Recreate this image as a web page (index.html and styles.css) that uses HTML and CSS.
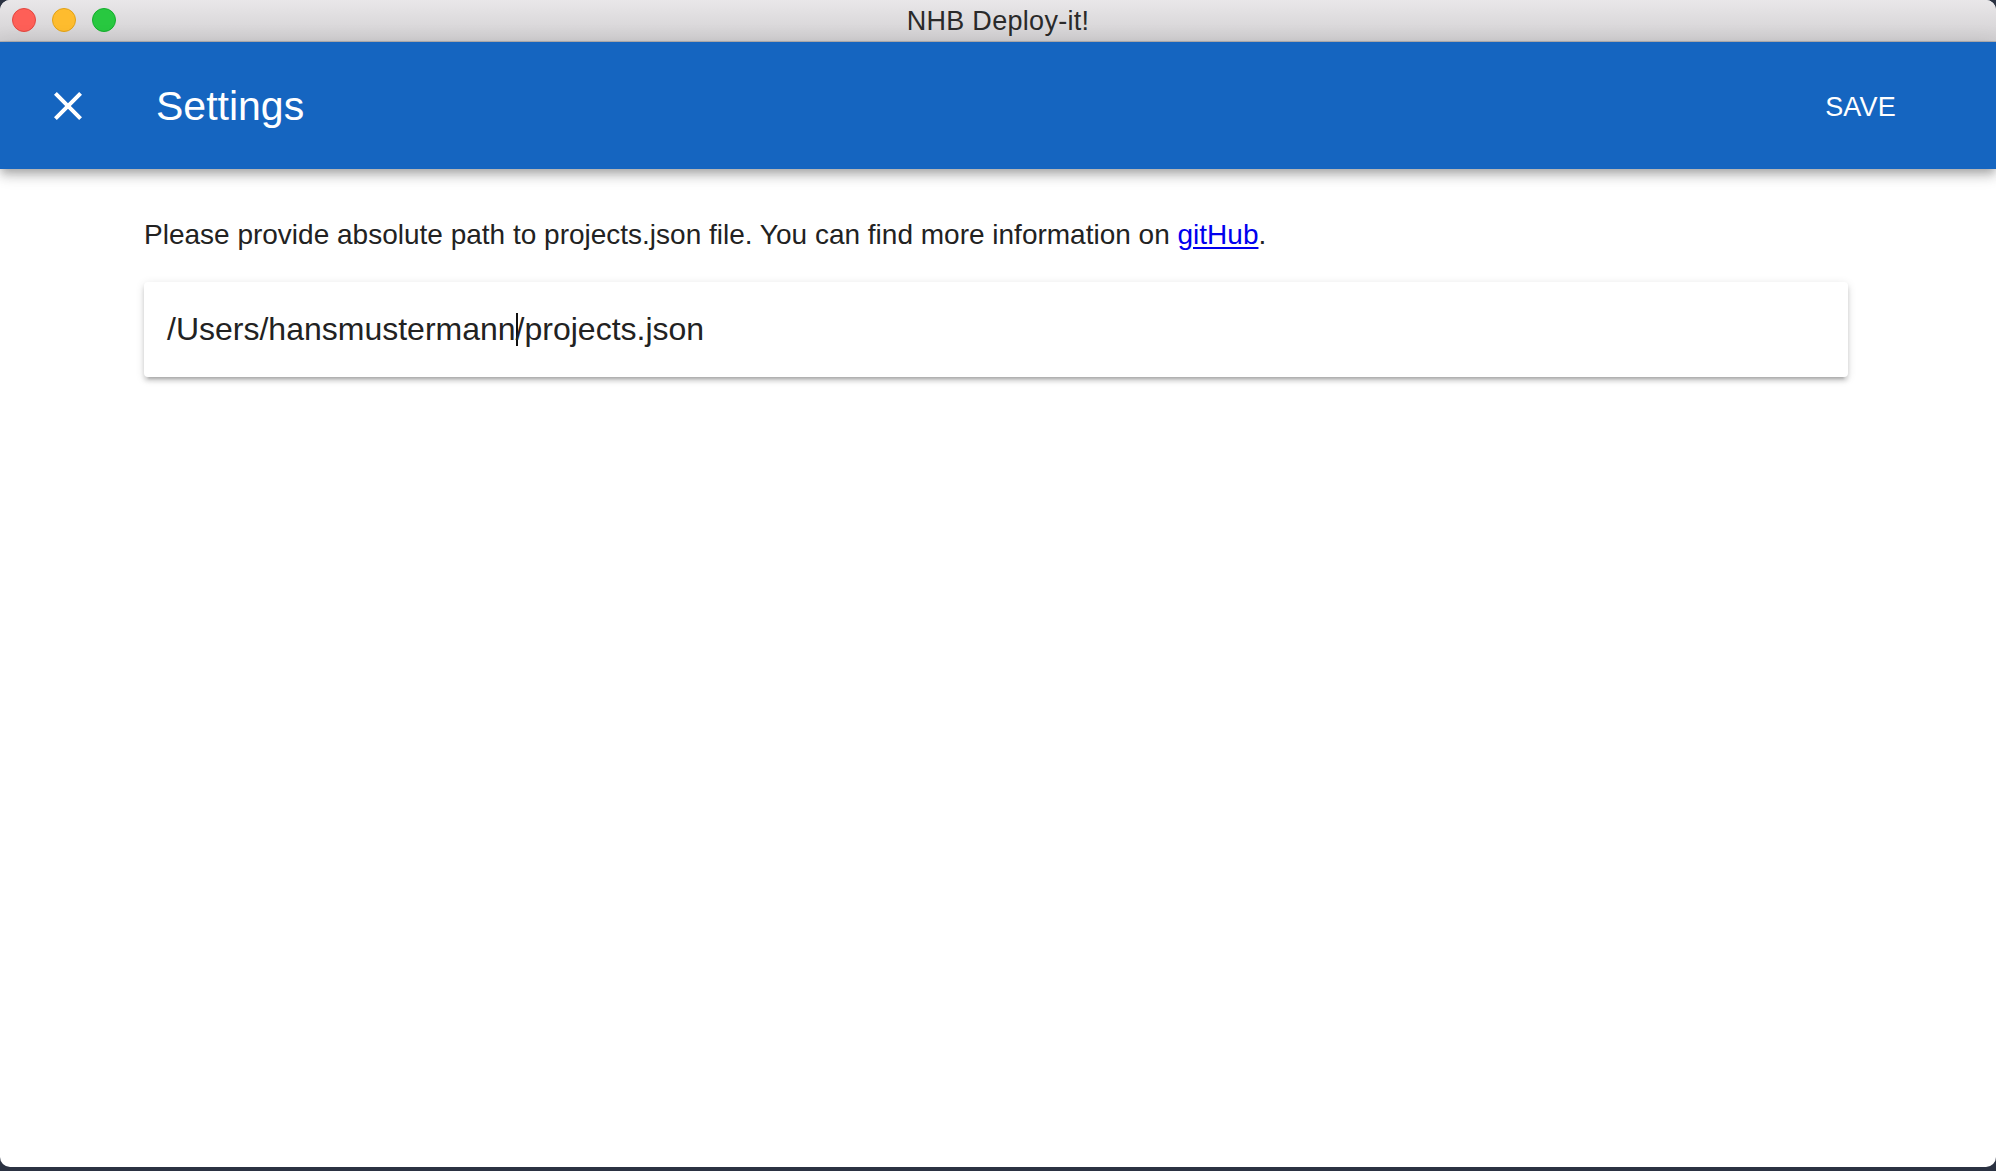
FILE: index.html
```html
<!DOCTYPE html>
<html lang="en">
<head>
<meta charset="utf-8">
<title>NHB Deploy-it!</title>
<link rel="stylesheet" href="styles.css">
</head>
<body>
<div class="window">
  <div class="titlebar">
    <div class="lights">
      <span class="light red"></span>
      <span class="light yellow"></span>
      <span class="light green"></span>
    </div>
    <div class="title">NHB Deploy-it!</div>
    <div class="spacer"></div>
  </div>
  <header class="appbar">
    <svg class="close-icon" viewBox="0 0 24 24" width="48" height="48" aria-hidden="true">
      <path fill="#fff" d="M19 6.41L17.59 5 12 10.59 6.41 5 5 6.41 10.59 12 5 17.59 6.41 19 12 13.41 17.59 19 19 17.59 13.41 12z"/>
    </svg>
    <h1 class="appbar-title">Settings</h1>
    <button class="save-btn">SAVE</button>
  </header>
  <main class="content">
    <p class="hint">Please provide absolute path to projects.json file. You can find more information on <a href="#" class="link">gitHub</a>.</p>
    <div class="path-field"><span>/Users/hansmustermann</span><span class="caret"></span><span>/projects.json</span></div>
  </main>
</div>
</body>
</html>
```

FILE: styles.css
```css
* {
  box-sizing: border-box;
}

html, body {
  margin: 0;
  padding: 0;
  height: 100%;
}

body {
  background: #2b3242;
  font-family: "Liberation Sans", Arial, Helvetica, sans-serif;
  overflow: hidden;
}

.window {
  height: 1167px;
  background: #ffffff;
  border-radius: 10px;
  overflow: hidden;
  display: flex;
  flex-direction: column;
}

.titlebar {
  height: 42px;
  flex: 0 0 42px;
  background: linear-gradient(#e9e7e9, #d2d0d2);
  border-bottom: 1px solid #b4b2b4;
  display: grid;
  grid-template-columns: 1fr auto 1fr;
  align-items: center;
}

.lights {
  display: flex;
  gap: 16px;
  padding-left: 12px;
  padding-bottom: 2px;
}

.light {
  width: 24px;
  height: 24px;
  border-radius: 50%;
  display: block;
}

.red {
  background: #fe5f57;
  border: 1px solid #e2463f;
}

.yellow {
  background: #febc2e;
  border: 1px solid #e1a116;
}

.green {
  background: #28c840;
  border: 1px solid #14ae2c;
}

.title {
  font-size: 27px;
  color: #2a2a2a;
  letter-spacing: 0.3px;
  padding-top: 1px;
}

.appbar {
  height: 127px;
  flex: 0 0 127px;
  background: #1565c0;
  display: flex;
  align-items: center;
  padding: 0 70px 0 44px;
  position: relative;
  z-index: 2;
  box-shadow: 0 4px 8px -2px rgba(0, 0, 0, 0.2), 0 8px 10px 0 rgba(0, 0, 0, 0.14), 0 2px 20px 0 rgba(0, 0, 0, 0.12);
}

.close-icon {
  display: block;
  flex: 0 0 48px;
}

.appbar-title {
  margin: 0 0 0 64px;
  font-size: 41px;
  font-weight: normal;
  color: #ffffff;
  flex: 1;
  line-height: 1;
  padding-top: 2px;
}

.save-btn {
  background: transparent;
  border: 0;
  color: #ffffff;
  font-family: "Liberation Sans", Arial, Helvetica, sans-serif;
  font-size: 27px;
  padding: 18px 30px 14px;
  line-height: 1;
  letter-spacing: 0.2px;
}

.content {
  flex: 1;
  padding: 50px 148px 0 144px;
}

.hint {
  margin: 0;
  font-size: 28px;
  line-height: 32px;
  color: #222222;
}

.link {
  color: #0000ee;
  text-decoration: underline;
  text-underline-offset: 3px;
}

.path-field {
  margin-top: 31px;
  height: 95px;
  border-radius: 4px;
  background: #ffffff;
  box-shadow: 0 2px 10px 0 rgba(0, 0, 0, 0.12), 0 4px 4px 0 rgba(0, 0, 0, 0.14), 0 6px 2px -4px rgba(0, 0, 0, 0.14);
  padding: 29px 23px;
  font-size: 32px;
  line-height: 37px;
  color: #222222;
  white-space: nowrap;
}

.caret {
  display: inline-block;
  width: 2px;
  height: 33px;
  margin-right: -2px;
  background: #111111;
  vertical-align: -6px;
}
```
